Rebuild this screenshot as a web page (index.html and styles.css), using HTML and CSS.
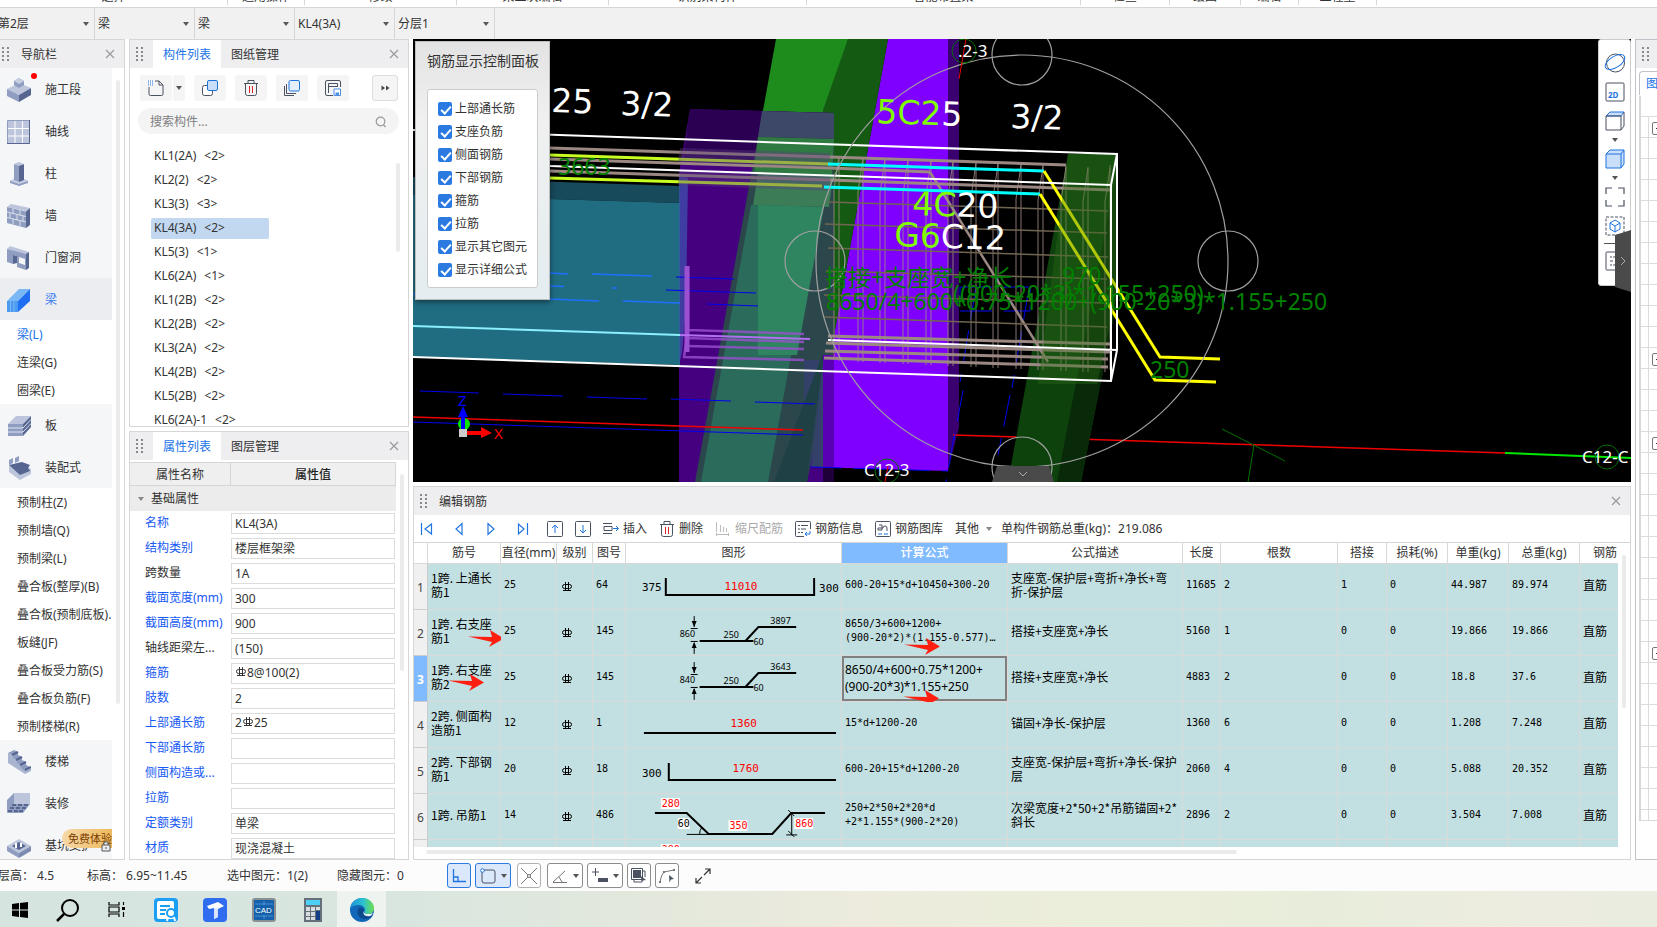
FILE: index.html
```html
<!DOCTYPE html>
<html lang="zh-CN">
<head>
<meta charset="utf-8">
<title>编辑钢筋</title>
<link rel="stylesheet" href="styles.css">
</head>
<body>
<svg class="defs" aria-hidden="true">
  <symbol id="rebar" viewBox="0 0 10 10"><path d="M2.500 2.500h5q2 0 2 2t-2 2h-5q-2 0-2-2t2-2zM3.500 0v9M6.500 0v9M1 8.500h8" fill="none" stroke="currentColor"/></symbol>
  <symbol id="close" viewBox="0 0 10 10"><path d="M1 1l8 8M9 1L1 9" fill="none" stroke="#999" stroke-width="1.2"/></symbol>
  <symbol id="grip" viewBox="0 0 7 15"><path d="M0 1h2M5 1h2M0 5h2M5 5h2M0 9h2M5 9h2M0 13h2M5 13h2" stroke="#888" stroke-width="2"/></symbol>
  <symbol id="pointer" viewBox="0 0 36 18"><path d="M0 6.5l24 .5-2-7 14 8.500-15 8.500 3-5z" fill="#ff1f10"/></symbol>
  <symbol id="bend" viewBox="0 0 216 45"><path d="M74 31h54M120 31l13-14h38" fill="none" stroke="#000" stroke-width="2"/><path d="M68.500 6v11M65 18.500h7M68.500 33v11M65 31.500h7" stroke="#000" fill="none"/><path d="M66 11h5l-2.500 6zM66 38h5l-2.500-6z"/></symbol>
</svg>

<div class="ribbon"><span class="w228">选择</span><span class="w77">通用操作</span><span class="w152">修改</span><span class="w152">梁二次编辑</span><span class="w198">识别梁构件</span><span class="w274">智能布置梁</span><span class="w89">检查</span><span class="w71">绘图</span><span class="w58">编辑</span><span class="w78">工程量</span></div>

<div class="selectors">
  <label class="pick first"><select aria-label="楼层"><option>第2层</option></select></label>
  <label class="pick"><select aria-label="构件大类"><option>梁</option></select></label>
  <label class="pick"><select aria-label="构件类型"><option>梁</option></select></label>
  <label class="pick"><select aria-label="构件"><option>KL4(3A)</option></select></label>
  <label class="pick"><select aria-label="分层"><option>分层1</option></select></label>
</div>

<main class="workspace">
  <nav class="panel nav">
    <header class="bar navbar"><svg class="grip"><use href="#grip"/></svg><h2>导航栏</h2><button class="x" aria-label="关闭"><svg><use href="#close"/></svg></button></header>
    <div class="navbody">
      <div class="navlist">
        <button class="cat"><svg viewBox="0 0 24 24"><path d="M0 11l12-6 12 5-12 7z" fill="#bcc5dc"/><path d="M0 11l12 6v7L0 18z" fill="#8f9dc0"/><path d="M24 10l-12 7v7l12-7z" fill="#566690"/><path d="M7 3l5-3 5 3v4l-5 3-5-3z" fill="#8f9dc0"/><path d="M7 3l5-3 5 3-5 3z" fill="#c6cee2"/></svg>施工段<i class="dot"></i></button>
        <button class="cat"><svg viewBox="0 0 24 24"><path d="M.5.5h22v23H.5z" fill="#bcc5dc" stroke="#8f9dc0"/><path d="M8 1v22M15.500 1v22M1 8.500h21M1 16h21" stroke="#fff"/><path d="M22.500 0v23.500H0" fill="none" stroke="#566690"/></svg>轴线</button>
        <button class="cat"><svg viewBox="0 0 24 24"><path d="M3 19l9-4 9 4v2l-9 3-9-3z" fill="#8f9dc0"/><path d="M3 19l9-4 9 4-9 3z" fill="#c6cee2"/><path d="M7 2l5 1.500V20l-5-2z" fill="#8f9dc0"/><path d="M12 3.500L17 2v16l-5 2z" fill="#566690"/><path d="M7 2l5-2 5 2-5 2z" fill="#bcc5dc"/></svg>柱</button>
        <button class="cat"><svg viewBox="0 0 24 24"><path d="M0 3l4-3 19 4-4 3z" fill="#bcc5dc"/><path d="M0 3l19 4.500V24L0 19z" fill="#8f9dc0"/><path d="M19 7.500L23 4v17l-4 3z" fill="#566690"/><path d="M0 8l19 4.500M0 13.500L19 18M6 4.500V10M13 6v5.500M3 9v5M10 10.500V16M16 12v5.500M6 15v5.500M13 16.500V22" stroke="#d9dfeb" fill="none"/></svg>墙</button>
        <button class="cat"><svg viewBox="0 0 24 24"><path d="M0 3l3-3 19 6-3 3z" fill="#bcc5dc"/><path d="M0 3l19 5v16l-9-3V10l-4-1v9l-6-2z" fill="#8f9dc0"/><path d="M19 8l3-2v16l-3 2zM6 9l4 1v7L6 18z" fill="#566690"/><path d="M12 11l6 2v6l-6-2z" fill="#f5f6f8"/></svg>门窗洞</button>
        <button class="cat on"><svg viewBox="0 0 24 24"><path d="M0 13L12 1h11L11 13z" fill="#7ab7f5"/><path d="M11 13L23 1v12L11 24z" fill="#1f6ef2"/><path d="M0 13h11v11H0z" fill="#4a9af2"/><path d="M3.500 13v11M7 13v11" stroke="#7ab7f5"/></svg>梁</button>
        <a class="sub on" href="#">梁(L)</a><a class="sub" href="#">连梁(G)</a><a class="sub" href="#">圈梁(E)</a>
        <button class="cat"><svg viewBox="0 0 24 24"><path d="M1 10L9 2h15l-8 8z" fill="#bcc5dc"/><path d="M1 10h15v12H1z" fill="#8f9dc0"/><path d="M16 10l8-8v11l-8 9z" fill="#566690"/><path d="M1 14h15l8-8.500M1 18h15l8-8.500" stroke="#dfe4ef" fill="none"/></svg>板</button>
        <button class="cat"><svg viewBox="0 0 24 24"><path d="M2 4l4-2v5l-4 2zM8 2l4-2v5L8 7z" fill="#8f9dc0"/><path d="M2 10l12-4 10 7v5l-11 6-11-8z" fill="#bcc5dc"/><path d="M2 9l13-3 8 3-2 3 2 3-10 4z" fill="#566690"/></svg>装配式</button>
        <a class="sub" href="#">预制柱(Z)</a><a class="sub" href="#">预制墙(Q)</a><a class="sub" href="#">预制梁(L)</a><a class="sub" href="#">叠合板(整厚)(B)</a><a class="sub" href="#">叠合板(预制底板).</a><a class="sub" href="#">板缝(JF)</a><a class="sub" href="#">叠合板受力筋(S)</a><a class="sub" href="#">叠合板负筋(F)</a><a class="sub" href="#">预制楼梯(R)</a>
        <button class="cat"><svg viewBox="0 0 24 24"><path d="M1 3v10l17 11 6-3v-3z" fill="#a9b4cf"/><path d="M1 3l6-3 4 2v3l4 2v3l4 2v3l5 3-6 3-4-3v-3l-4-2v-3l-4-2V6z" fill="#8f9dc0"/><path d="M5 5l6-3M9 10l6-3M13 15l6-3M18 20l6-3" stroke="#566690" stroke-width="2"/></svg>楼梯</button>
        <button class="cat"><svg viewBox="0 0 24 24"><path d="M0 8l7-7v11l-7 9z" fill="#8f9dc0"/><path d="M7 1h16v11H7z" fill="#bcc5dc"/><path d="M7 12h16l-7 9H0z" fill="#8f9dc0"/><path d="M5 13h4M11 13h4M17 13h4M3 16h4M9 16h4M15 16h4M1 19h4M7 19h4M12 19h4" stroke="#44547f" stroke-width="1.500"/></svg>装修</button>
        <button class="cat"><svg viewBox="0 0 24 24"><path d="M0 12l12-7 12 7-12 7z" fill="#bcc5dc"/><path d="M0 12l12 7v5L0 17z" fill="#8f9dc0"/><path d="M24 12l-12 7v5l12-7z" fill="#7d8bb0"/><path d="M5 12l7-4 7 4-7 4z" fill="#566690"/><path d="M9 9v5M14 9v4" stroke="#fff" stroke-width="2"/></svg>基坑支护<span class="trial">免费体验</span><svg class="lock" viewBox="0 0 10 12"><path d="M1 5h8v6H1zM3 5V2h4v3M5 7v2" fill="#eee" stroke="#555"/></svg></button>
      </div>
      <i class="thumb navthumb"></i>
    </div>
  </nav>

  <div class="col">
    <section class="panel comps">
      <header class="bar"><svg class="grip"><use href="#grip"/></svg><button class="tab on">构件列表</button><button class="tab">图纸管理</button><button class="x" aria-label="关闭"><svg><use href="#close"/></svg></button></header>
      <div class="tools">
        <div class="split"><button aria-label="新建"><svg viewBox="0 0 16 16"><path d="M1 7v7q0 1.500 1.500 1.500h11q1.500 0 1.500-1.500V5l-4-4H7M11 1v4h4" fill="none" stroke="#4a5160"/><path d="M0 1h5M0 3h5M0 5h5" stroke="#2b7de0" stroke-dasharray="1 1"/></svg></button><button class="more" aria-label="更多新建"><i class="tri"></i></button></div>
        <button aria-label="复制"><svg viewBox="0 0 16 16"><rect x=".5" y="5.500" width="10" height="10" rx="2" fill="#fff" stroke="#4a5160"/><rect x="5.500" y=".5" width="10" height="10" rx="1.500" fill="#c9def8" stroke="#1f74e0"/></svg></button>
        <button aria-label="删除"><svg viewBox="0 0 16 16"><path d="M1 3.500h14M5 3V.5h6V3M2.500 4v9.500q0 2 2 2h7q2 0 2-2V4" fill="none" stroke="#4a5160"/><path d="M6.500 6v7M9.500 6v7" stroke="#d22"/></svg></button>
        <button aria-label="层间复制"><svg viewBox="0 0 16 16"><path d="M.5 6v9.500H10M2.500 4v9.500H12" fill="none" stroke="#4a5160"/><rect x="5" y=".5" width="10.500" height="10.500" rx="1.500" fill="#e3effc" stroke="#1f74e0"/></svg></button>
        <button aria-label="存档"><svg viewBox="0 0 16 16"><path d="M8 15.500H2Q.5 15.500.5 14V2Q.5.500 2 .5h12q1.500 0 1.500 1.500v5M3.500 13V3.500h9V7M3.500 6.500h9" fill="none" stroke="#4a5160"/><path d="M9 9h6.500v6.500H9z" fill="#fff" stroke="#4c8de6"/><path d="M10.500 12.500h3.500v3h-3.500z" fill="#4c8de6"/></svg></button>
        <button class="expand" aria-label="展开"><svg viewBox="0 0 16 16"><path d="M4.500 5.500v5L8 8zM9 5.500v5l3.500-2.500z" fill="#444"/></svg></button>
      </div>
      <label class="search"><input type="text" placeholder="搜索构件..." aria-label="搜索构件"><svg viewBox="0 0 12 12"><circle cx="5.500" cy="5.500" r="4.300" fill="none" stroke="#999" stroke-width="1.200"/><path d="M8.500 9l2 2" stroke="#999" stroke-width="1.300"/></svg></label>
      <div class="listwrap">
        <ul class="list">
          <li><button><span>KL1(2A)</span><span>&lt;2&gt;</span></button></li><li><button><span>KL2(2)</span><span>&lt;2&gt;</span></button></li><li><button><span>KL3(3)</span><span>&lt;3&gt;</span></button></li><li><button class="on"><span>KL4(3A)</span><span>&lt;2&gt;</span></button></li><li><button><span>KL5(3)</span><span>&lt;1&gt;</span></button></li><li><button><span>KL6(2A)</span><span>&lt;1&gt;</span></button></li><li><button><span>KL1(2B)</span><span>&lt;2&gt;</span></button></li><li><button><span>KL2(2B)</span><span>&lt;2&gt;</span></button></li><li><button><span>KL3(2A)</span><span>&lt;2&gt;</span></button></li><li><button><span>KL4(2B)</span><span>&lt;2&gt;</span></button></li><li><button><span>KL5(2B)</span><span>&lt;2&gt;</span></button></li><li><button><span>KL6(2A)-1</span><span>&lt;2&gt;</span></button></li>
        </ul>
        <i class="thumb listthumb"></i>
      </div>
    </section>

    <section class="panel props">
      <header class="bar"><svg class="grip"><use href="#grip"/></svg><button class="tab on">属性列表</button><button class="tab">图层管理</button><button class="x" aria-label="关闭"><svg><use href="#close"/></svg></button></header>
      <div class="propwrap">
        <div class="proptable">
          <div class="prophead"><span>属性名称</span><b>属性值</b></div>
          <div class="group"><i class="tri"></i>基础属性</div>
          <label class="prop blue"><span>名称</span><input value="KL4(3A)"></label>
          <label class="prop blue"><span>结构类别</span><input value="楼层框架梁"></label>
          <label class="prop"><span>跨数量</span><input value="1A"></label>
          <label class="prop blue"><span>截面宽度(mm)</span><input value="300"></label>
          <label class="prop blue"><span>截面高度(mm)</span><input value="900"></label>
          <label class="prop"><span>轴线距梁左...</span><input value="(150)"></label>
          <div class="prop blue"><span>箍筋</span><div class="field" role="textbox" aria-label="箍筋"><svg><use href="#rebar"/></svg>8@100(2)</div></div>
          <label class="prop blue"><span>肢数</span><input value="2"></label>
          <div class="prop blue"><span>上部通长筋</span><div class="field" role="textbox" aria-label="上部通长筋">2<svg><use href="#rebar"/></svg>25</div></div>
          <label class="prop blue"><span>下部通长筋</span><input value=""></label>
          <label class="prop blue"><span>侧面构造或...</span><input value=""></label>
          <label class="prop blue"><span>拉筋</span><input value=""></label>
          <label class="prop blue"><span>定额类别</span><input value="单梁"></label>
          <label class="prop blue"><span>材质</span><input value="现浇混凝土"></label>
        </div>
        <i class="thumb propthumb"></i>
      </div>
    </section>
  </div>

  <div class="col center">
    <section class="view">
      <svg class="scene" viewBox="413 39 1218 443" preserveAspectRatio="xMinYMin slice">
        <path d="M888 39h60v432l-138-4z" fill="#8000ff"/>
        <path d="M948 39h11v388l-11 44z" fill="#3a0070"/>
        <path d="M776 39h72l-14 99h-76z" fill="#1d8c1d"/>
        <path d="M848 39h40l-58 319-7-10V110z" fill="#145a12"/>
        <path d="M690 109l144 4v369H679V173z" fill="#44007f"/>
        <path d="M690 109l144 4v54l-151-6z" fill="#2b0052"/>
        <path d="M762 111l72 2v26l-76-2z" fill="#3d4768"/>
        <path d="M758 137l76 2v210L807 482H695z" fill="#2c474c"/>
        <path d="M824 358h10v109h-23zM804 360h20l-14 107h-6z" fill="#33416a"/>
        <path d="M758 137l76 2-2 37-78-3z" fill="#2f7a42"/>
        <path d="M758 173l75 3-4 31-76-2z" fill="#3c7d57"/>
        <path d="M751 205l67 2-50 275h-67z" fill="#2b6b5b"/>
        <path d="M758 205l66 2-27 148h-39z" fill="#2f8560"/>
        <path d="M822 355h2l-17 127h-33z" fill="#1f4146"/>
        <path d="M823 355h11v112h-11z" fill="#5a00b4"/>
        <path d="M823 467h11v15h-11z" fill="#1f0038"/>
        <path d="M413 177l267 9v17l-267-8z" fill="#174a5a"/>
        <path d="M413 195l267 8v162l-267-8z" fill="#206d82"/>
        <path d="M679 175l9 3-2 130-4 45-3 12z" fill="#3d55b0" opacity=".7"/>
        <path d="M550 273l18 1M592 274l60 2M550 286l14 .5M612 288h5M550 299l49 2M623 301l57 2M413 294h2" stroke="#1f6fff" stroke-width="1.500"/>
        <path d="M676 277l58 2M666 290l90 3M707 304l51 2M420 391l59 2M503 394l60 2M587 397l60 2M671 399l60 2M755 402l60 2M413 422l390 13" stroke="#0000f0" fill="none"/>
        <path d="M413 417l267 9 123 4M953 435l277 9 275 9" stroke="#f00000" stroke-width="1.500" fill="none"/>
        <path d="M1505 453l126 5" stroke="#00e800" stroke-width="2"/>
        <path d="M1222 429l63 32M1254 445l-6 37" stroke="#007000" fill="none"/>
        <path d="M954 436l-8 46M810 467l138 4M976 287l-16 95M1029 288l-17 100M963 390l-9 50M1010 395l-12 60M960 287h70v24h-70z" stroke="#0000f0" fill="none" stroke-dasharray="32 12"/>
        <path d="M1068 154h49v146l-36 182h-73z" fill="#0e420d"/>
        <path d="M1107 220l10-50v130l-36 182h-24z" fill="#092a09"/>
        <g stroke="#9c8882" fill="none">
          <path d="M550 148l280 9 236 8M550 159l280 9 100 4M550 171l280 9 281 10M828 336l282 8M826 343l284 9M825 351l283 8M824 358l284 9" stroke-width="3"/>
          <path d="M930 172l118 190" stroke-width="2.500"/>
          <path d="M839 156v205M834 190l5-34M863 157v205M858 192l5-34M885 158v205M880 193l5-34M908 159v205M903 194l5-34M931 160v205M926 195l5-34M953 161v205M948 196l5-34M976 162v205M971 197l5-34M998 163v205M993 198l5-34M1021 164v205M1016 199l5-34M1043 165v205M1038 200l5-34M1066 166v205M1061 201l5-34M1088 167v205M1083 202l5-34M1110 165v205M1105 202l5-34M834 190v170M858 192v170M880 193v170M903 194v170M926 195v170M948 196v170M971 197v170M993 198v170M1016 199v170M1038 200v170M1061 201v170M1083 202v170M1105 202v170" opacity=".85"/>
          <path d="M828 202l280 9M825 224l282 9M828 248l280 9M826 271l281 8M824 295l283 8M823 317l284 10" stroke="#706550" stroke-width="1.500"/>
        </g>
        <path d="M688 266v63l-4 28 120 3M688 330l116 4M687 338l117 4M687 346l117 3" stroke="#9a50d0" stroke-width="2.500" fill="none" opacity=".8"/>
        <path d="M687 266v86" stroke="#9a50d0" stroke-width="5"/>
        <path d="M550 155l280 9M550 178l272 8" stroke="#c8ff20" stroke-width="3"/>
        <path d="M680 148l150 5v14l-152-5zM680 170l150 6v15l-152-6z" fill="#5b3c7a" opacity=".4"/>
        <path d="M828 164l216 7M824 187l216 7" stroke="#00ffff" stroke-width="3"/>
        <path d="M1044 171l116 186 60 2M1040 194l115 186 61 2" stroke="#ffff00" stroke-width="3" fill="none"/>
        <path d="M1068 154h49v140l-20 90h-59z" fill="#2c6e14" opacity=".38"/>
        <path d="M413 130l704 24v196l-6 31-698-24M550 166l561 19 6-31M1111 185v196M828 340l289 10" stroke="#fff" stroke-width="2" fill="none"/>
        <path d="M413 326l267 9" stroke="#8ceffc" stroke-width="2"/>
        <path d="M680 335l130 4" stroke="#b070f0" stroke-width="2"/>
        <g fill="none" stroke="#a0a0a0" stroke-width="1.200"><circle cx="1022" cy="261" r="206"/><circle cx="1022" cy="55" r="30"/><circle cx="815" cy="261" r="30"/><circle cx="1228" cy="261" r="30"/><circle cx="1022" cy="467" r="30"/></g>
        <g fill="none" stroke="#007000"><circle cx="964" cy="51" r="12"/><circle cx="887" cy="471" r="12"/><circle cx="1607" cy="457" r="12"/></g>
        <path d="M966 39l-7 40M888 466l-3 16" stroke="#f00000"/>
        <g class="big"><text x="551" y="112" transform="rotate(2 551 112)">25</text><text x="620" y="115" transform="rotate(2 620 115)">3/2</text><text x="876" y="123" transform="rotate(2 876 123)"><tspan class="lime">5C2</tspan>5</text><text x="1010" y="128" transform="rotate(2 1010 128)">3/2</text><text x="912" y="215" transform="rotate(2 912 215)"><tspan class="lime">4C</tspan>20</text><text x="894" y="246" transform="rotate(2 894 246)"><tspan class="lime">G6</tspan>C12</text></g>
        <g class="dim"><text x="558" y="175">3663</text><text x="825" y="286">搭接+支座宽+净长</text><text x="1062" y="284">970</text><text x="953" y="302">((900-20*3)*1.155+250)</text><text x="826" y="310">8650/4+600+0.75*1200+(900-20*3)*1.155+250</text><text x="1150" y="378">250</text></g>
        <g class="axis"><text x="958" y="57">.2-3</text><text x="864" y="476">C12-3</text><text x="1582" y="463">C12-C</text></g>
        <circle cx="464" cy="424" r="6" fill="#00e800"/><path d="M463 430v-14" stroke="#0000ff" stroke-width="4"/><path d="M458 417h10l-5-11z" fill="#0000ff"/><path d="M466 433h16" stroke="#f00" stroke-width="4"/><path d="M481 427v11l11-5z" fill="#f00"/><path d="M459 429h8v8h-8z" fill="#ccc"/>
        <text x="458" y="406" class="ax blueax">Z</text><text x="494" y="439" class="ax redax">X</text>
        <path d="M992 482l5-16h52l5 16z" fill="#4a4a4a"/><path d="M1019 472l4 4 4-4" stroke="#aaa" fill="none"/>
      </svg>

      <aside class="float">
        <h2>钢筋显示控制面板</h2>
        <div class="checks">
          <label><input type="checkbox" checked>上部通长筋</label><label><input type="checkbox" checked>支座负筋</label><label><input type="checkbox" checked>侧面钢筋</label><label><input type="checkbox" checked>下部钢筋</label><label><input type="checkbox" checked>箍筋</label><label><input type="checkbox" checked>拉筋</label><label><input type="checkbox" checked>显示其它图元</label><label><input type="checkbox" checked>显示详细公式</label>
        </div>
      </aside>

      <div class="viewtools">
        <button aria-label="动态观察"><svg viewBox="0 0 20 20"><circle cx="10.500" cy="10" r="9" fill="none" stroke="#4a5160"/><ellipse cx="10" cy="9" rx="11" ry="5.500" transform="rotate(-32 10 9)" fill="none" stroke="#1f74e0"/></svg></button>
        <button aria-label="二维"><svg viewBox="0 0 20 20"><rect x="1" y="1" width="18" height="18" rx="1" fill="none" stroke="#4a5160"/><text x="3" y="16" class="two">2D</text></svg></button>
        <button aria-label="俯视"><svg viewBox="0 0 20 20"><path d="M1 5l4-4h14l-3 4z" fill="#c9def8" stroke="#1f74e0"/><path d="M1 5h15v14H1zM16 19l3-4V1" fill="none" stroke="#4a5160"/></svg></button>
        <button class="mini" aria-label="视图"><i class="tri"></i></button>
        <button aria-label="实体"><svg viewBox="0 0 20 20"><path d="M1 5l4-4h14v14l-3 4H1z" fill="#c9def8" stroke="#1f74e0"/><path d="M1 5h15v14M16 5l3-4" fill="none" stroke="#1f74e0"/></svg></button>
        <button class="mini" aria-label="显示方式"><i class="tri"></i></button>
        <button aria-label="全屏"><svg viewBox="0 0 20 20"><path d="M1 7V1h6M13 1h6v6M19 13v6h-6M7 19H1v-6" fill="none" stroke="#4a5160" stroke-width="1.200"/></svg></button>
        <button aria-label="局部三维"><svg viewBox="0 0 20 20"><rect x="1" y="1" width="18" height="18" fill="none" stroke="#4a5160" stroke-dasharray="3 1.500"/><path d="M10 4l5 3v6l-5 3-5-3V7zM5 7l5 3 5-3M10 10v6" fill="none" stroke="#1f74e0"/></svg></button>
        <hr>
        <button aria-label="显示设置"><svg viewBox="0 0 20 20"><rect x="1" y="1" width="18" height="18" rx="1" fill="none" stroke="#4a5160"/><path d="M5 6h2M8 6h7M5 10h3M10 10h5M5 14h2M8 14h7" stroke="#4a5160"/></svg></button>
      </div>
      <button class="handle" aria-label="收起"><svg viewBox="0 0 16 62"><path d="M0 5l16-5v62L0 57z" fill="#4a4a4a"/><path d="M6 27l4 4-4 4" fill="none" stroke="#aaa"/></svg></button>
    </section>

    <section class="panel editor">
      <header class="bar"><svg class="grip"><use href="#grip"/></svg><h2>编辑钢筋</h2><button class="x" aria-label="关闭"><svg><use href="#close"/></svg></button></header>
      <div class="edtools">
        <button class="nv" aria-label="首行"><svg viewBox="0 0 16 16"><path d="M2.500 2v12M12.500 3v10L6 8z" fill="none" stroke="#1f74e0" stroke-width="1.200"/></svg></button>
        <button class="nv" aria-label="上一行"><svg viewBox="0 0 16 16"><path d="M11 2.500v11L5 8z" fill="none" stroke="#1f74e0" stroke-width="1.200"/></svg></button>
        <button class="nv" aria-label="下一行"><svg viewBox="0 0 16 16"><path d="M5 2.500v11L11 8z" fill="none" stroke="#1f74e0" stroke-width="1.200"/></svg></button>
        <button class="nv" aria-label="末行"><svg viewBox="0 0 16 16"><path d="M12.500 2v12M3.500 3v10L9 8z" fill="none" stroke="#1f74e0" stroke-width="1.200"/></svg></button>
        <button aria-label="上移"><svg viewBox="0 0 16 16"><rect x=".5" y=".5" width="15" height="15" rx="1" fill="none" stroke="#4a5160"/><path d="M8 12V4M5 7l3-3 3 3" fill="none" stroke="#1f74e0"/></svg></button>
        <button aria-label="下移"><svg viewBox="0 0 16 16"><rect x=".5" y=".5" width="15" height="15" rx="1" fill="none" stroke="#4a5160"/><path d="M8 4v8M5 9l3 3 3-3" fill="none" stroke="#1f74e0"/></svg></button>
        <button><svg viewBox="0 0 16 16"><path d="M0 2.500h9M0 12.500h9M1 5.500h8v4H1z" fill="none" stroke="#4a5160"/><path d="M10 7.500h5M13 5l2.500 2.500L13 10" fill="none" stroke="#1f74e0"/></svg>插入</button>
        <button><svg viewBox="0 0 16 16"><path d="M1 3.500h14M5 3V.5h6V3M2.500 4v9.500q0 2 2 2h7q2 0 2-2V4" fill="none" stroke="#4a5160"/><path d="M6.500 6v7M9.500 6v7" stroke="#d22"/></svg>删除</button>
        <button disabled><svg viewBox="0 0 16 16"><path d="M1.500 1v10M5.500 4v7M8.500 6v5M11.500 7v4M1 13.500h13M1.500 12v3M13.500 12v3" fill="none" stroke="#bbb"/></svg>缩尺配筋</button>
        <button><svg viewBox="0 0 16 16"><path d="M9 15.500H1.500q-1 0-1-1v-13q0-1 1-1h13q1 0 1 1V8M3 4.500h2M6 4.500h7M3 8h2M6 8h5M3 11.500h2M6 11.500h2" fill="none" stroke="#4a5160"/><path d="M15 10v3h-5M12 11l-2 2 2 2" fill="none" stroke="#1f74e0"/></svg>钢筋信息</button>
        <button><svg viewBox="0 0 16 16"><rect x=".5" y=".5" width="15" height="15" rx="1" fill="none" stroke="#4a5160"/><path d="M4 4h3v5H3V7h5q0-2 2-2t2 2v3" fill="none" stroke="#4a5160"/><path d="M3 13h4M9 13h4" stroke="#1f74e0"/></svg>钢筋图库</button>
        <button class="other">其他<i class="tri"></i></button>
        <span class="total">单构件钢筋总重(kg)：219.086</span>
      </div>
      <div class="tablewrap">
        <table>
          <colgroup><col class="w14"><col class="w73"><col class="w56"><col class="w36"><col class="w33"><col class="w216"><col class="w166"><col class="w175"><col class="w38"><col><col class="w49"><col class="w61"><col class="w61"><col class="w71"><col class="w38"></colgroup>
          <thead><tr><th></th><th>筋号</th><th>直径(mm)</th><th>级别</th><th>图号</th><th>图形</th><th class="sel">计算公式</th><th>公式描述</th><th>长度</th><th>根数</th><th>搭接</th><th>损耗(%)</th><th>单重(kg)</th><th>总重(kg)</th><th>钢筋</th></tr></thead>
          <tbody>
            <tr><th>1</th><td class="cjk">1跨. 上通长<br>筋1</td><td>25</td><td><svg class="rb"><use href="#rebar"/></svg></td><td>64</td><td class="pic"><svg viewBox="0 0 216 45"><path d="M40 14v17h149V14" class="bar2"/><text x="16" y="27">375</text><text x="99" y="26" class="r">11010</text><text x="194" y="28">300</text></svg></td><td>600-20+15*d+10450+300-20</td><td class="cjk">支座宽-保护层+弯折+净长+弯<br>折-保护层</td><td>11685</td><td>2</td><td>1</td><td>0</td><td>44.987</td><td>89.974</td><td class="cjk">直筋</td></tr>
            <tr><th>2</th><td class="cjk">1跨. 右支座<br>筋1<svg class="mark m1"><use href="#pointer"/></svg></td><td>25</td><td><svg class="rb"><use href="#rebar"/></svg></td><td>145</td><td class="pic"><svg viewBox="0 0 216 45"><use href="#bend"/><g class="sm"><text x="54" y="27">860</text><text x="98" y="28">250</text><text x="128" y="35">60</text><text x="145" y="14">3897</text></g></svg></td><td>8650/3+600+1200+<br>(900-20*2)*(1.155-0.577)…<svg class="mark m3"><use href="#pointer"/></svg></td><td class="cjk">搭接+支座宽+净长</td><td>5160</td><td>1</td><td>0</td><td>0</td><td>19.866</td><td>19.866</td><td class="cjk">直筋</td></tr>
            <tr class="current"><th>3</th><td class="cjk">1跨. 右支座<br>筋2<svg class="mark m2"><use href="#pointer"/></svg></td><td>25</td><td><svg class="rb"><use href="#rebar"/></svg></td><td>145</td><td class="pic"><svg viewBox="0 0 216 45"><use href="#bend"/><g class="sm"><text x="54" y="27">840</text><text x="98" y="28">250</text><text x="128" y="35">60</text><text x="145" y="14">3643</text></g></svg></td><td class="edit"><textarea aria-label="计算公式">8650/4+600+0.75*1200+
(900-20*3)*1.155+250</textarea><svg class="mark m4"><use href="#pointer"/></svg></td><td class="cjk">搭接+支座宽+净长</td><td>4883</td><td>2</td><td>0</td><td>0</td><td>18.8</td><td>37.6</td><td class="cjk">直筋</td></tr>
            <tr><th>4</th><td class="cjk">2跨. 侧面构<br>造筋1</td><td>12</td><td><svg class="rb"><use href="#rebar"/></svg></td><td>1</td><td class="pic"><svg viewBox="0 0 216 45"><path d="M18 31h193" class="bar2"/><text x="105" y="25" class="r">1360</text></svg></td><td>15*d+1200-20</td><td class="cjk">锚固+净长-保护层</td><td>1360</td><td>6</td><td>0</td><td>0</td><td>1.208</td><td>7.248</td><td class="cjk">直筋</td></tr>
            <tr><th>5</th><td class="cjk">2跨. 下部钢<br>筋1</td><td>20</td><td><svg class="rb"><use href="#rebar"/></svg></td><td>18</td><td class="pic"><svg viewBox="0 0 216 45"><path d="M43 15v17h168" class="bar2"/><text x="16" y="29">300</text><text x="107" y="24" class="r">1760</text></svg></td><td>600-20+15*d+1200-20</td><td class="cjk">支座宽-保护层+弯折+净长-保护<br>层</td><td>2060</td><td>4</td><td>0</td><td>0</td><td>5.088</td><td>20.352</td><td class="cjk">直筋</td></tr>
            <tr><th>6</th><td class="cjk">1跨. 吊筋1</td><td>14</td><td><svg class="rb"><use href="#rebar"/></svg></td><td>486</td><td class="pic"><svg viewBox="0 0 216 45"><path d="M29 19h32l22 21h64l19-21h34" class="bar2"/><path d="M61 40.500h22M74 40q0-4 2-6M166.500 19v22M161 41h11M163 16l6 6M163 37l6 6" stroke="#000" fill="none"/><path d="M35 4h19v11H35zM52 24h12v11H52zM103 26h19v11h-19zM169 24h19v11h-19z" fill="#fff"/><g class="md"><text x="36" y="13" class="r">280</text><text x="52" y="33">60</text><text x="104" y="35" class="r">350</text><text x="170" y="33" class="r">860</text></g></svg></td><td>250+2*50+2*20*d<br>+2*1.155*(900-2*20)</td><td class="cjk">次梁宽度+2*50+2*吊筋锚固+2*<br>斜长</td><td>2896</td><td>2</td><td>0</td><td>0</td><td>3.504</td><td>7.008</td><td class="cjk">直筋</td></tr>
            <tr><th></th><td></td><td></td><td></td><td></td><td class="pic"><svg viewBox="0 0 216 45"><path d="M35 4h19v11H35z" fill="#fff"/><g class="md"><text x="36" y="13" class="r">280</text></g></svg></td><td></td><td></td><td></td><td></td><td></td><td></td><td></td><td></td><td></td></tr>
          </tbody>
        </table>
        <i class="thumb tablethumb"></i>
      </div>
      <i class="thumb hthumb"></i>
    </section>
  </div>

  <aside class="panel right">
    <header class="bar"><svg class="grip"><use href="#grip"/></svg></header>
    <button class="rtab">图</button>
    <div class="rgrid"><i class="box b1"></i><i class="box b2"></i><i class="box b3"></i><i class="box b4"></i></div>
  </aside>
</main>

<footer class="status">
  <div class="facts"><span class="f1">层高： 4.5</span><span class="f2">标高： 6.95~11.45</span><span class="f3">选中图元：1(2)</span><span>隐藏图元：0</span></div>
  <div class="modes">
    <button class="on" aria-label="正交"><svg viewBox="0 0 16 16"><path d="M2.500 1v12.500H15M2.500 9H7v4" fill="none" stroke="#1f74e0" stroke-width="1.300"/></svg></button>
    <button class="on wide" aria-label="捕捉"><svg viewBox="0 0 16 16"><rect x="2" y="2" width="13" height="13" rx="2" fill="none" stroke="#4a5160"/><circle cx="2.500" cy="2.500" r="1.800" fill="#fff" stroke="#1f74e0"/></svg><i class="tri"></i></button>
    <button class="dim1" aria-label="交点"><svg viewBox="0 0 16 16"><path d="M0 0l16 16M16 0L0 16" stroke="#777"/><circle cx="8" cy="8" r="1.500" fill="#fff" stroke="#777"/></svg></button>
    <button class="wide" aria-label="角度"><svg viewBox="0 0 16 16"><path d="M1 14.500h14M1 14L13 3M7 9l3 5" fill="none" stroke="#777"/></svg><i class="tri"></i></button>
    <button class="wide" aria-label="偏移"><svg viewBox="0 0 16 16"><path d="M0 4h7M3.500 0v8" stroke="#4a5160"/><path d="M6 10h10v4H6z" fill="#4a5160"/></svg><i class="tri"></i></button>
    <button aria-label="选择"><svg viewBox="0 0 16 16"><path d="M2 2h8v8H2z" fill="#4a5160"/><path d="M.5.5h11v11H.5zM12 3h2v6M3 12v2h7" fill="none" stroke="#4a5160"/><path d="M10 8l5 4-3 .5-1.500 3z" fill="#4a5160"/></svg></button>
    <button aria-label="折线"><svg viewBox="0 0 16 16"><path d="M1 14Q2 7 5 4l10-2" fill="none" stroke="#777"/><path d="M0 13h2v2H0zM4 3h2v2H4zM14 1h2v2h-2z" fill="#777"/><path d="M10 7l5 4-3 .5-1.500 3z" fill="#4a5160"/></svg></button>
    <button class="bare" aria-label="放大"><svg viewBox="0 0 16 16"><path d="M9 7l6-6M10 1h5v5M7 9l-6 6M1 10v5h5" fill="none" stroke="#333" stroke-width="1.200"/></svg></button>
  </div>
</footer>

<div class="taskbar">
  <button aria-label="开始"><svg viewBox="0 0 24 24"><path d="M2 6l7-1v6.500H2zM10 5l8-1v7.500h-8zM2 12.500h7V19l-7-1zM10 12.500h8V20l-8-1z"/></svg></button>
  <button aria-label="搜索"><svg viewBox="0 0 24 24"><circle cx="14" cy="10" r="8" fill="none" stroke="#000" stroke-width="2"/><path d="M8 16l-7 7" stroke="#000" stroke-width="2.500"/></svg></button>
  <button aria-label="任务视图"><svg viewBox="0 0 24 24"><path d="M4 4v3h10V4M4 19v-3h10v3M4 9h10v5H4zM18.500 4v3M18.500 14v5" fill="none" stroke="#000" stroke-width="1.200"/><path d="M17 9h3v3h-3z"/></svg></button>
  <button aria-label="计价"><svg viewBox="0 0 24 24"><rect width="24" height="24" rx="4" fill="#1a9ff5"/><rect x="3" y="3" width="17" height="18" rx="2" fill="#fff"/><path d="M6 8h10M6 12h6M6 16h5" stroke="#1a9ff5" stroke-width="2"/><circle cx="17" cy="15" r="4" fill="#fff" stroke="#1a9ff5" stroke-width="2"/><path d="M14 19l-1 4M20 19l1 4" stroke="#fff" stroke-width="2"/></svg></button>
  <button aria-label="算量"><svg viewBox="0 0 24 24"><rect width="24" height="24" rx="4" fill="#2f6cf0"/><path d="M4 8l11-4 6 4-6 3v8l-4 2V10l-5 1z" fill="#fff"/><path d="M11 10l4 1v8l-4 2z" fill="#d8e4ff"/></svg></button>
  <button aria-label="看图"><svg viewBox="0 0 24 24"><rect x="1" y="1" width="22" height="22" rx="2" fill="#1460aa" stroke="#8a8f94" stroke-width="2"/><text x="3" y="15" class="cad">CAD</text><path d="M12 3v4M12 17v4M3 6h18M3 18h18" stroke="#6ab4ee" stroke-width=".6"/></svg></button>
  <button aria-label="计算器"><svg viewBox="0 0 24 24"><path d="M3 0h18v24H3z" fill="#66707a"/><path d="M5 2h14v5H5z" fill="#4cd0f5"/><path d="M5 9h4v4H5zM10 9h4v4h-4zM15 9h4v3h-4zM5 14h4v4H5zM10 14h4v4h-4zM5 19h4v3H5zM10 19h4v3h-4z" fill="#d8dde0"/><path d="M15 13h4v9h-4z" fill="#123f86"/></svg></button>
  <button class="on" aria-label="浏览器"><svg viewBox="0 0 24 24"><defs><linearGradient id="eg" x2="1"><stop stop-color="#1b8fd8"/><stop offset=".55" stop-color="#2cc1d0"/><stop offset="1" stop-color="#6fe04c"/></linearGradient></defs><circle cx="12" cy="12" r="12" fill="#1267b8"/><path d="M0 11C1 4 6 0 12 0c7 0 12 5 12 10 0 4-3 6-6 6-4 0-4-2-3-4 0-3-3-5-6-5-4 0-8 2-9 4z" fill="url(#eg)"/><path d="M9 10c-3 3-2 10 5 11 4 0 7-1 9-4-3 1-11 2-9-5 0-2-3-3-5-2z" fill="#0c4a8e"/><path d="M14 12c-1 2 0 4 4 4 2 0 4 0 5-2-1 3-2 4-3 4-5 1-8-2-6-6z" fill="#edf2ee"/></svg></button>
</div>
</body>
</html>
```
FILE: styles.css
```css
* { box-sizing: border-box; }
body { margin: 0; height: 100vh; display: flex; flex-direction: column; overflow: hidden; background: #fff; color: #333; font: 12px/16px "Noto Sans", "Noto Sans CJK SC", sans-serif; }
button, input, select, textarea { font: inherit; color: inherit; margin: 0; padding: 0; border: 0; background: none; border-radius: 0; outline: none; }
button { display: flex; align-items: center; justify-content: center; white-space: nowrap; }
h2 { margin: 0; font-size: 12px; font-weight: 400; }
a { color: inherit; text-decoration: none; }
.defs { position: absolute; width: 0; height: 0; }
.tri { display: block; width: 0; height: 0; border: 3px solid transparent; border-top: 4px solid #555; border-bottom: 0; }
.thumb { display: block; flex: none; width: 4px; border-radius: 2px; background: #ebebeb; }

.ribbon { flex: none; height: 8px; display: flex; align-items: flex-end; overflow: hidden; border-bottom: 1px solid #d6d6d6; padding-bottom: 2px; }
.ribbon span { flex: none; border-right: 1px solid #d6d6d6; text-align: center; }
.w228 { width: 228px; } .w77 { width: 77px; } .w152 { width: 152px; } .w198 { width: 198px; } .w274 { width: 274px; } .w89 { width: 89px; } .w71 { width: 71px; } .w58 { width: 58px; } .w78 { width: 78px; }

.selectors { flex: none; height: 31px; display: flex; background: #f1f1f1; }
.pick { position: relative; width: 100px; border-right: 1px solid #d6d6d6; }
.pick.first { width: 95px; }
.pick select { appearance: none; width: 100%; height: 100%; padding-left: 3px; }
.pick.first select { padding-left: 0; text-indent: -2px; }
.pick::after { content: ""; position: absolute; right: 5px; top: 14px; border: 3px solid transparent; border-top: 4px solid #555; border-bottom: 0; }

.workspace { flex: 1; min-height: 0; display: grid; grid-template-columns: 125px 280px minmax(0, 1fr) 22px; gap: 4px; }
.panel { border: 1px solid #d6d6d6; background: #fff; min-width: 0; min-height: 0; display: flex; flex-direction: column; overflow: hidden; }
.bar { flex: none; height: 28px; display: flex; align-items: center; background: #eeeef0; }
.grip { flex: none; width: 7px; height: 15px; margin: 0 10px 0 6px; }
.bar .x { margin-left: auto; margin-right: 9px; }
.x svg { width: 10px; height: 10px; }
.tab { height: 28px; padding: 2px 10px 0; }
.tab.on { background: #fff; color: #1a73e8; }
.bar h2 { margin-left: 2px; padding-top: 2px; }
.col { display: flex; flex-direction: column; gap: 4px; min-width: 0; min-height: 0; }

.nav { border-left: 0; }
.navbar .grip { margin-left: 2px; margin-right: 10px; }
.navbody { flex: 1; min-height: 0; display: flex; gap: 4px; background: #fff; }
.navlist { width: 112px; overflow: hidden; }
.cat { position: relative; width: 100%; height: 42px; justify-content: flex-start; padding: 2px 0 0 7px; gap: 14px; background: #f5f6f8; }
.cat svg { flex: none; width: 24px; height: 24px; }
.cat.on { background: #ebedf1; color: #3d7df0; }
.dot { position: absolute; left: 31px; top: 5px; width: 6px; height: 6px; border-radius: 3px; background: #f00; }
.sub { display: block; height: 28px; line-height: 30px; padding-left: 17px; white-space: nowrap; }
.sub.on { color: #1a73e8; }
.trial { position: absolute; right: 0; top: 5px; height: 19px; line-height: 19px; padding-left: 6px; border-radius: 10px 0 0 10px; background: linear-gradient(90deg, #f6d8a8, #edb95c); color: #7a3d00; font-size: 11px; }
.cat .lock { position: absolute; right: 1px; top: 16px; width: 10px; height: 12px; }
.navthumb { height: 624px; margin-top: 12px; }

.comps { flex: 0 0 388px; }
.tools { display: flex; height: 40px; padding: 7px 10px; gap: 9px; }
.tools button { width: 32px; height: 26px; background: #f5f5f5; border-radius: 3px; }
.tools svg { width: 16px; height: 16px; }
.split { display: flex; gap: 1px; }
.tools .more { width: 12px; }
.tools .expand { width: 26px; margin-left: auto; border: 1px solid #ddd; }
.search { flex: none; height: 26px; margin: 0 9px 0 8px; padding: 1px 12px 0; border-radius: 13px; background: #f4f4f4; display: flex; align-items: center; }
.search input { flex: 1; min-width: 0; }
.search input::placeholder { color: #808080; }
.search svg { width: 12px; height: 12px; }
.listwrap { flex: 1; min-height: 0; overflow: hidden; display: flex; padding: 10px 8px 0 21px; }
.list { flex: 1; list-style: none; margin: 0; padding: 0; }
.list li { height: 24px; display: flex; align-items: center; }
.list button { width: 118px; height: 21px; padding-left: 3px; gap: 8px; justify-content: flex-start; border-radius: 2px; }
.list .on { background: #c1d8f0; }
.listthumb { height: 89px; margin-top: 19px; }

.props { flex: 1; }
.propwrap { flex: 1; min-height: 0; overflow: hidden; display: flex; gap: 4px; padding-top: 2px; }
.proptable { width: 266px; }
.prophead { display: flex; height: 24px; line-height: 24px; background: #efefef; border: 1px solid #d6d6d6; border-left: 0; text-align: center; }
.prophead span { width: 101px; border-right: 1px solid #d6d6d6; }
.prophead b { flex: 1; font-weight: 500; color: #222; }
.group { display: flex; align-items: center; gap: 7px; height: 25px; padding-left: 8px; background: #ececec; }
.group .tri { border-top-color: #888; }
.prop { display: flex; align-items: center; height: 25px; padding: 1px 1px 2px 15px; }
.prop span { width: 86px; white-space: nowrap; }
.prop.blue span { color: #1659f5; }
.prop input, .field { flex: 1; min-width: 0; height: 21px; border: 1px solid #dcdcdc; padding: 0 3px; }
.field { display: flex; align-items: center; }
.field svg { width: 10px; height: 10px; margin: 0 1px 3px; }
.propthumb { height: 197px; margin-top: 12px; }

.view { position: relative; flex: 1; min-height: 0; background: #000; overflow: hidden; }
.scene { display: block; width: 100%; height: 100%; }
.big text { font: 33px "DejaVu Sans", sans-serif; fill: #fff; }
.big .lime { fill: #7fff00; }
.dim text { font: 23px "Noto Sans", "Noto Sans CJK SC", sans-serif; fill: #008000; }
.axis text { font: 17px "Noto Sans", sans-serif; fill: #fff; }
.ax { font: 15px "Noto Sans", sans-serif; }
.blueax { fill: #00f; } .redax { fill: #f00; }
.float { position: absolute; left: 2px; top: 2px; width: 135px; padding: 11px; border: 1px solid #bdbdbd; background: linear-gradient(#e3e3e3, #f0f0f0 30%, #e4edf0); box-shadow: 0 2px 6px rgba(0, 0, 0, .5); }
.float h2 { font-size: 14px; line-height: 16px; white-space: nowrap; }
.checks { margin-top: 20px; padding: 7px 10px 6px; border: 1px solid #ccc; border-radius: 3px; background: #fff; }
.checks label { display: flex; align-items: center; gap: 3px; height: 23px; white-space: nowrap; }
.checks input { appearance: none; flex: none; position: relative; width: 14px; height: 14px; border-radius: 2px; background: #2a7ae2; }
.checks input:checked::after { content: ""; position: absolute; left: 5px; top: 2px; width: 4px; height: 8px; border: solid #fff; border-width: 0 2px 2px 0; transform: rotate(42deg); }
.viewtools { position: absolute; right: 0; top: 0; width: 33px; padding: 13px 0 14px; background: #fff; border: 1px solid #ccc; border-radius: 3px; display: flex; flex-direction: column; align-items: center; gap: 9px; }
.viewtools svg { width: 20px; height: 20px; overflow: visible; }
.viewtools .mini { height: 4px; margin: -2px 0; }
.viewtools hr { width: 22px; height: 1px; border: 0; background: #555; margin: -2px 0; }
.two { font: bold 8px "Noto Sans", sans-serif; fill: #1f74e0; }
.handle { position: absolute; right: 0; top: 191px; width: 16px; height: 62px; }
.handle svg { width: 16px; height: 62px; }

.editor { flex: 0 0 374px; }
.edtools { flex: none; height: 27px; display: flex; align-items: center; padding-left: 5px; }
.edtools svg { width: 16px; height: 16px; }
.edtools button { gap: 4px; margin-right: 12px; padding-top: 1px; }
.edtools .nv { margin-right: 16px; }
.edtools .other { margin-right: 9px; }
.edtools button .tri { margin-left: 3px; border-top-color: #888; }
.edtools button:disabled { color: #aaa; }
.total { white-space: nowrap; padding-top: 1px; }
.tablewrap { flex: none; height: 305px; overflow: hidden; display: flex; gap: 4px; padding-right: 4px; border-top: 1px solid #d6d6d6; }
.tablethumb { margin-top: 12px; height: 153px; }
table { flex: 1; min-width: 0; table-layout: fixed; border-collapse: separate; border-spacing: 0; color: #000; }
.w14 { width: 14px; } .w73 { width: 73px; } .w56 { width: 56px; } .w36 { width: 36px; } .w33 { width: 33px; } .w216 { width: 216px; } .w166 { width: 166px; } .w175 { width: 175px; } .w38 { width: 38px; } .w49 { width: 49px; } .w61 { width: 61px; }
thead th { height: 21px; padding: 0; font-weight: 400; color: #333; background: #fff; border-right: 1px solid #d8d8d8; border-bottom: 1px solid #d8d8d8; white-space: nowrap; overflow: hidden; }
thead th:last-child { padding-left: 13px; text-align: left; border-right: 0; }
thead .sel { background: #80bbff; color: #fff; font-weight: 500; }
tbody th { padding: 2px 0 0; font-weight: 400; font-size: 12px; color: #444; background: #f0f0f0; border-right: 1px solid #ccc; border-bottom: 1px solid #ccc; }
tbody tr { height: 46px; }
td { position: relative; height: 46px; padding: 0 0 3px 3px; background: #c2dfe1; border-right: 1px solid #dadada; border-bottom: 1px solid #dadada; font: 10px/14px "DejaVu Sans Mono", monospace; white-space: nowrap; }
td:last-child { border-right: 0; }
td.cjk { font: 12px/14px "Noto Sans CJK SC", sans-serif; }
.current th { background: #80bbff; color: #fff; font-weight: 700; }
.rb { display: block; width: 10px; height: 10px; margin: 3px 0 0 2px; }
td.pic { padding: 0; }
.pic svg { display: block; width: 215px; height: 45px; overflow: visible; }
.pic text { font: 11px "DejaVu Sans Mono", monospace; }
.pic .sm text { font: 9px "Noto Sans", sans-serif; }
.pic .md text { font: 10px "DejaVu Sans Mono", monospace; }
.pic .r { fill: #f00; }
.bar2 { fill: none; stroke: #000; stroke-width: 2; }
td.edit { padding: 0; }
.edit textarea { display: block; width: 100%; height: 45px; resize: none; overflow: hidden; padding: 3px 1px 0; border: 2px solid #808080; font: 12px/17px "Noto Sans", sans-serif; white-space: pre; }
.mark { position: absolute; width: 36px; height: 18px; }
.m1 { left: 40px; top: 20px; } .m2 { left: 20px; top: 18px; } .m3 { left: 62px; top: 28px; } .m4 { left: 61px; top: 34px; }
.hthumb { width: 811px; height: 4px; margin: 3px 0 0 12px; }

.right { border-right: 0; border-color: #bfc3c9; }
.rtab { flex: none; height: 24px; margin: 3px 0 0 3px; padding-left: 6px; justify-content: flex-start; color: #1a73e8; border: 1px solid #bfc3c9; border-width: 1px 0 0 1px; border-radius: 4px 0 0 0; overflow: hidden; }
.rgrid { position: relative; height: 725px; margin: 1px 0 0 3px; border-left: 2px solid #d8d8d8; border-bottom: 1px solid #d8d8d8; background: linear-gradient(90deg, transparent 7px, #dcdcdc 7px, #dcdcdc 8px, transparent 8px) 0 21px no-repeat, repeating-linear-gradient(#fff 0 20px, #dcdcdc 20px 21px); }
.box { position: absolute; left: 11px; width: 13px; height: 13px; border: 1px solid #777; border-radius: 2px; background: #fff; }
.box::after { content: ""; position: absolute; left: 3px; top: 5px; width: 6px; height: 1px; background: #333; }
.b1 { top: 26px; } .b2 { top: 257px; } .b3 { top: 341px; } .b4 { top: 551px; }

.status { flex: none; height: 31px; display: flex; align-items: center; background: #fcfcfc; }
.facts { width: 447px; display: flex; white-space: pre; overflow: hidden; padding-top: 1px; }
.facts span { flex: none; }
.f1 { width: 87px; text-indent: -2px; } .f2 { width: 140px; } .f3 { width: 110px; }
.modes { display: flex; align-items: center; gap: 4px; }
.modes button { width: 24px; height: 25px; border: 1px solid #8c8c8c; border-radius: 3px; background: #fff; gap: 5px; }
.modes .wide { width: 36px; }
.modes .on { background: #dbe8fb; border-color: #2a7ae2; }
.modes .dim1 { margin: 0 2px; border-color: #b0b0b0; }
.modes svg { width: 16px; height: 16px; }
.modes .bare { border: 0; background: none; margin-left: 8px; }

.taskbar { flex: none; height: 36px; display: flex; background: linear-gradient(90deg, #d6e4e0, #d9e6df 25%, #e4e8dc 40%, #ecebdd 52%, #ebeeda 65%, #e8eddb 80%, #edece0 92%, #eaece0); }
.taskbar button { width: 49px; height: 36px; flex: none; padding-top: 2px; }
.taskbar button:first-child { width: 43px; }
.taskbar svg { width: 24px; height: 24px; }
.taskbar .on { background: #eef3f0; }
.cad { font: 8px "Liberation Sans", sans-serif; fill: #fff; }
```
